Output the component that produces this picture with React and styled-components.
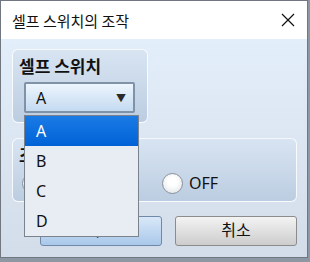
import styled, { createGlobalStyle } from 'styled-components';

const GlobalStyle = createGlobalStyle`
  html, body {
    margin: 0;
    padding: 0;
    background: #8e98a4;
    font-family: "Noto Sans", "Noto Sans CJK KR", sans-serif;
  }
`;

const Window = styled.div`
  box-sizing: border-box;
  width: 308px;
  height: 258px;
  border: 1px solid #707780;
  background: #ffffff;
  display: flex;
  flex-direction: column;
`;

const TitleBar = styled.div`
  height: 38px;
  flex: none;
  display: flex;
  align-items: center;
  justify-content: space-between;
  padding: 0 12px 0 11px;
  background: #ffffff;
`;

const Title = styled.span`
  font-family: "Noto Sans CJK KR", sans-serif;
  font-size: 15px;
  color: #111;
`;

const Close = styled.svg`
  width: 14px;
  height: 14px;
`;

const Body = styled.div`
  flex: 1;
  display: flex;
  flex-direction: column;
  padding: 10px 10px 0 11px;
  background: linear-gradient(#e3eefb, #d3dde9);
`;

const Group = styled.div`
  box-sizing: border-box;
  width: ${p => p.$w}px;
  height: ${p => p.$h}px;
  border: 1px solid rgba(255, 255, 255, 0.85);
  border-radius: 6px;
  background: linear-gradient(#d8e4f2, #bccde1);
  padding: 6px 0 0 6px;
  margin-bottom: ${p => p.$mb || 0}px;
  position: relative;
  z-index: ${p => p.$z || 0};
`;

const Label = styled.div`
  font-family: "Noto Sans CJK KR", sans-serif;
  font-weight: 700;
  font-size: 17px;
  line-height: 20px;
  color: #111;
`;

const ComboWrap = styled.div`
  position: relative;
  margin: 6px 0 0 5px;
  width: 111px;
`;

const Combo = styled.div`
  box-sizing: border-box;
  height: 31px;
  border: 2px solid #7f92a8;
  border-radius: 2px;
  background: linear-gradient(#edf5fd, #c4daf1);
  display: flex;
  align-items: center;
  justify-content: space-between;
  padding: 0 7px 0 10px;
  font-size: 16px;
  color: #111;
`;

const Arrow = styled.span`
  font-size: 10px;
  color: #2a2a2a;
`;

const List = styled.div`
  position: absolute;
  left: 0;
  top: calc(100% + 2px);
  box-sizing: border-box;
  width: 115px;
  height: 122px;
  border: 1px solid #7a828c;
  background: #e7edf3;
  display: flex;
  flex-direction: column;
`;

const Item = styled.div`
  height: 30px;
  display: flex;
  align-items: center;
  padding-left: 11px;
  font-size: 16px;
  color: ${p => (p.$sel ? '#ffffff' : '#111')};
  background: ${p => (p.$sel ? 'linear-gradient(#1a7be6, #0062d6)' : 'transparent')};
`;

const RadioRow = styled.div`
  display: flex;
  align-items: center;
  margin-top: 7px;
  padding-left: 3px;
`;

const Radio = styled.label`
  display: flex;
  align-items: center;
  gap: 6px;
  width: ${p => (p.$w ? `${p.$w}px` : 'auto')};
  font-size: 16px;
  color: #111;
`;

const Dot = styled.span`
  box-sizing: border-box;
  width: 21px;
  height: 21px;
  border-radius: 50%;
  border: 1px solid #8a929c;
  background: radial-gradient(circle at 50% 40%, #ffffff 30%, #dcdfe3);
`;

const Buttons = styled.div`
  display: flex;
  justify-content: flex-end;
  gap: 13px;
  width: 285px;
`;

const Button = styled.button`
  box-sizing: border-box;
  width: 122px;
  height: 30px;
  border-radius: 3px;
  border: 1px solid ${p => (p.$primary ? '#7089a8' : '#8c8c8c')};
  background: ${p =>
    p.$primary ? 'linear-gradient(#d9e8f8, #a9c8ea)' : 'linear-gradient(#f3f3f3, #cdcdcd)'};
  font-family: "Noto Sans CJK KR", sans-serif;
  font-size: 16px;
  line-height: 19px;
  color: #111;
  padding: 0 0 4px;
`;

export default function App() {
  return (
    <>
      <GlobalStyle />
      <Window>
        <TitleBar>
          <Title>셀프 스위치의 조작</Title>
          <Close viewBox="0 0 14 14">
            <path d="M1 1 L13 13 M13 1 L1 13" stroke="#111" strokeWidth="1.2" />
          </Close>
        </TitleBar>
        <Body>
          <Group $w={136} $h={74} $mb={15} $z={2}>
            <Label>셀프 스위치</Label>
            <ComboWrap>
              <Combo>
                <span>A</span>
                <Arrow>▼</Arrow>
              </Combo>
              <List>
                <Item $sel>A</Item>
                <Item>B</Item>
                <Item>C</Item>
                <Item>D</Item>
              </List>
            </ComboWrap>
          </Group>
          <Group $w={285} $h={64} $mb={14}>
            <Label>조작</Label>
            <RadioRow>
              <Radio $w={140}>
                <Dot />
                ON
              </Radio>
              <Radio>
                <Dot />
                OFF
              </Radio>
            </RadioRow>
          </Group>
          <Buttons>
            <Button $primary>확인</Button>
            <Button>취소</Button>
          </Buttons>
        </Body>
      </Window>
    </>
  );
}
